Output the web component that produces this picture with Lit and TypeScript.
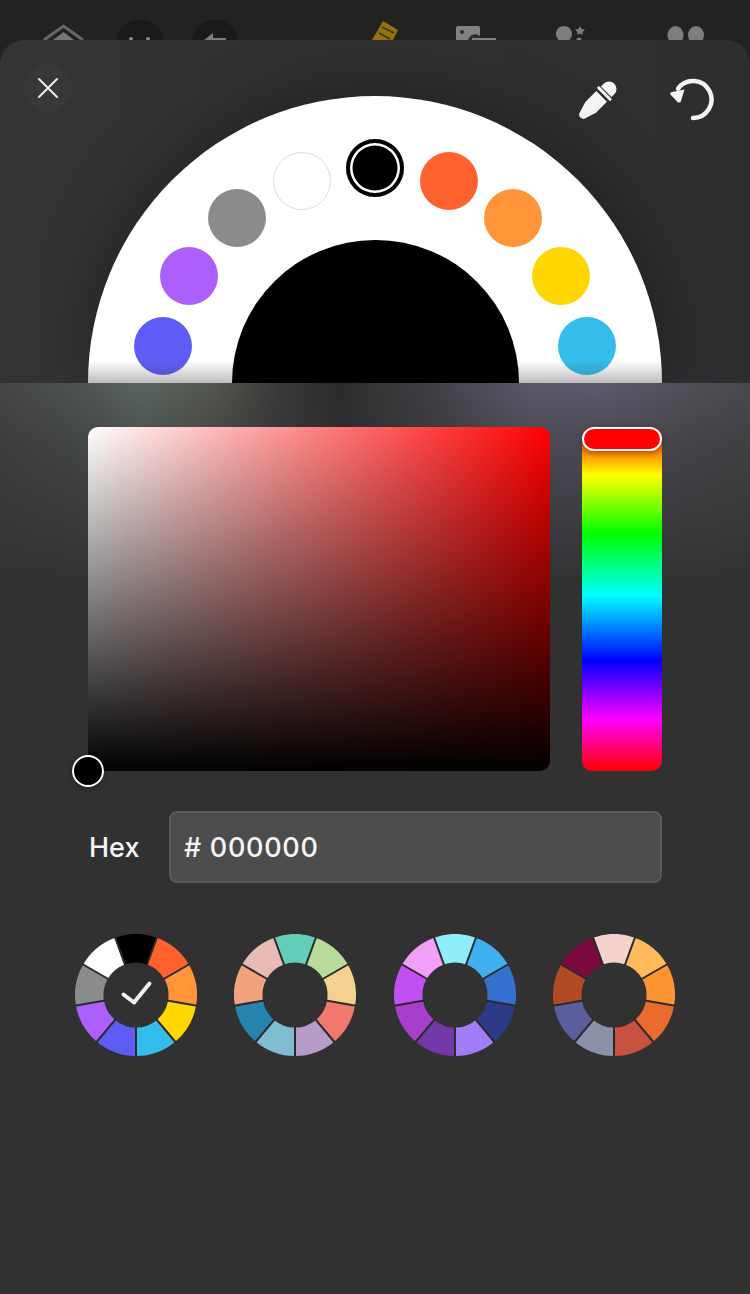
import { LitElement, html, svg, css } from 'lit';
import { customElement, state } from 'lit/decorators.js';

const WHEEL_R = 287;
const SWATCH_ORBIT = 215;
const SWATCH_SIZE = 58;
const PALETTE_R = 61;
const PALETTE_HOLE = 32.5;

// each palette runs clockwise, the first colour sits at twelve o'clock
const PALETTES = [
  ['#000000', '#ff612f', '#ff9438', '#ffd600', '#34bcea', '#5e5cf6', '#ad5ffe', '#8a8b8d', '#ffffff'],
  ['#62cdb8', '#b9dc9c', '#f3d18f', '#f0786e', '#b69bc9', '#7fbccf', '#2683ad', '#f0a37c', '#e8bcb5'],
  ['#90eef8', '#3eb0f0', '#3470d0', '#2c3a88', '#a27df8', '#7238a8', '#a83ecc', '#c050f0', '#f0a0f8'],
  ['#f3d3cb', '#fdb95a', '#fe9332', '#e96b2e', '#c9513f', '#8b91a8', '#5a5f9c', '#b24b24', '#7c0a3e'],
];

function polar(rad: number, a: number) {
  return [PALETTE_R + rad * Math.cos(a), PALETTE_R + rad * Math.sin(a)].map((n) => n.toFixed(2));
}

function segmentStart(i: number, count: number) {
  const step = (Math.PI * 2) / count;
  return -Math.PI / 2 - step / 2 + i * step;
}

function segmentPath(i: number, count: number) {
  const R = PALETTE_R;
  const r = PALETTE_HOLE;
  const a0 = segmentStart(i, count);
  const a1 = segmentStart(i + 1, count);
  return `M${polar(R, a0).join(' ')} A${R} ${R} 0 0 1 ${polar(R, a1).join(' ')} L${polar(r, a1).join(' ')} A${r} ${r} 0 0 0 ${polar(r, a0).join(' ')} Z`;
}

function seamPath(i: number, count: number) {
  const a = segmentStart(i, count);
  return `M${polar(PALETTE_HOLE - 1, a).join(' ')} L${polar(PALETTE_R + 1, a).join(' ')}`;
}

@customElement('app-root')
export class AppRoot extends LitElement {
  static styles = css`
    :host {
      display: block;
      width: 750px;
      height: 1294px;
      overflow: hidden;
      background: #202320;
      font-family: Inter, 'Liberation Sans', sans-serif;
    }
    .backdrop {
      display: block;
      width: 750px;
      height: 40px;
    }
    .head {
      position: relative;
      height: 343px;
      box-sizing: border-box;
      padding-top: 56px;
      border-radius: 24px 24px 0 0;
      overflow: hidden;
      background: linear-gradient(90deg, #323534 0%, #2f3131 40%, #2e2d30 100%);
    }
    .close {
      position: absolute;
      left: 24px;
      top: 24px;
      width: 48px;
      height: 48px;
      border-radius: 50%;
      background: #373939;
      display: flex;
      align-items: center;
      justify-content: center;
    }
    .dropper {
      position: absolute;
      left: 572px;
      top: 36px;
    }
    .undo {
      position: absolute;
      left: 664px;
      top: 34px;
    }
    .ring {
      position: relative;
      width: 574px;
      height: 287px;
      margin-left: 88px;
      border-radius: 287px 287px 0 0;
      background: #fff;
      box-shadow: 0 0 70px rgba(0, 0, 0, 0.35);
    }
    .ring::after {
      content: '';
      position: absolute;
      left: 0;
      right: 0;
      bottom: 0;
      height: 22px;
      background: linear-gradient(rgba(60, 62, 62, 0), rgba(60, 62, 62, 0.34));
    }
    .hole {
      position: absolute;
      left: 144px;
      bottom: 0;
      width: 287px;
      height: 143.5px;
      border-radius: 144px 144px 0 0;
      background: #000;
      z-index: 1;
    }
    .swatch {
      position: absolute;
      width: 58px;
      height: 58px;
      box-sizing: border-box;
      border-radius: 50%;
    }
    .swatch.light {
      border: 1px solid #dcdce4;
    }
    .swatch.selected {
      box-shadow: inset 0 0 0 4px #000, inset 0 0 0 6.5px #fff;
    }
    .panel {
      height: 911px;
      box-sizing: border-box;
      padding: 44px 88px 0;
      background:
        linear-gradient(rgba(50, 49, 50, 0), rgba(50, 49, 50, 0.4) 60px, #323132 200px) no-repeat,
        linear-gradient(90deg, #454545 0%, #4c5150 9%, #5b6560 19%, #54574f 28%, #3a3a3a 37%, #2b2b2b 45%,
          #3e3c40 56%, #5a5868 70%, #5c5a6c 80%, #525058 91%, #4a484c 100%);
    }
    .picker {
      display: flex;
      gap: 32px;
      height: 344px;
    }
    .sv {
      position: relative;
      flex: 1;
      border-radius: 10px;
      background:
        linear-gradient(to top, #000, rgba(0, 0, 0, 0)),
        linear-gradient(to right, #fff, #f00);
    }
    .sv-handle {
      position: absolute;
      left: -16px;
      bottom: -16px;
      width: 32px;
      height: 32px;
      box-sizing: border-box;
      border: 2px solid #fff;
      border-radius: 50%;
      background: #000;
      box-shadow: 0 1px 5px rgba(0, 0, 0, 0.4);
    }
    .hue {
      position: relative;
      width: 80px;
      border-radius: 10px;
      background: linear-gradient(#f00, #ff0 14%, #0f0 31%, #0ff 49%, #00f 68%, #f0f 85%, #f00);
    }
    .hue-handle {
      position: absolute;
      left: 0;
      top: 0;
      width: 80px;
      height: 24px;
      box-sizing: border-box;
      border: 2px solid #fff;
      border-radius: 12px;
      background: #f00;
      box-shadow: 0 2px 6px rgba(0, 0, 0, 0.35);
    }
    .hex-row {
      display: flex;
      align-items: center;
      height: 72px;
      margin-top: 40px;
    }
    .hex-label {
      width: 81px;
      padding-left: 1px;
      box-sizing: border-box;
      color: #f5f5f5;
      font-size: 27px;
      font-weight: 500;
    }
    .hex-input {
      flex: 1;
      height: 72px;
      box-sizing: border-box;
      display: flex;
      align-items: center;
      padding-left: 13px;
      border: 2px solid #5a595a;
      border-radius: 8px;
      background: #4d4c4d;
      color: #f5f5f5;
      font-size: 27px;
      font-weight: 500;
      letter-spacing: 0.7px;
      white-space: pre;
    }
    .palettes {
      display: flex;
      justify-content: space-between;
      margin: 51px -13px 0;
    }
    .palette {
      display: block;
      width: 122px;
      height: 122px;
    }
    .palette .seam {
      fill: none;
      stroke: #2b2a2b;
      stroke-width: 2;
    }
    .palette polyline {
      fill: none;
      stroke: #f4f4f4;
      stroke-width: 4;
      stroke-linecap: round;
      stroke-linejoin: round;
    }
  `;

  @state() private selectedPalette = 0;
  @state() private selectedColor = 0;
  @state() private hex = '000000';

  private renderBackdrop() {
    return html`
      <svg class="backdrop" viewBox="0 0 750 40">
        <path d="M44 40 L63.500 26 L83 40" fill="none" stroke="#666866" stroke-width="3" />
        <path d="M53 40 L63.500 32 L74 40 Z" fill="#757675" />
        <circle cx="140" cy="43" r="23.500" fill="#191b19" />
        <circle cx="131" cy="39" r="2" fill="#8a8a8a" />
        <circle cx="148" cy="39" r="2" fill="#8a8a8a" />
        <circle cx="215" cy="43" r="23.500" fill="#191b19" />
        <path d="M213 33 L204 40 L226 40 L226 38 L213 38 Z" fill="#7c7d7c" />
        <path d="M383 21 L398 30 L393 40 L372 40 Z" fill="#96720c" />
        <path d="M382 27 L394 33 M379 33 L390 39" stroke="#3a3416" stroke-width="1.500" />
        <path d="M456 28 Q456 26 458 26 L478 26 Q480 26 480 28 L480 40 L456 40 Z" fill="#808180" />
        <circle cx="462" cy="32" r="2" fill="#2b2c2b" />
        <path d="M468 40 Q470 34 476 34 L480 36 L480 40 Z" fill="#2b2c2b" />
        <rect x="472" y="38" width="24" height="2" fill="#808180" />
        <circle cx="564" cy="34" r="8" fill="#7d7e7d" />
        <path d="M580 26 L581.500 29 L585 29.500 L582.500 32 L583 35 L580 33.500 L577 35 L577.500 32 L575 29.500 L578.500 29 Z" fill="#7d7e7d" />
        <circle cx="579" cy="40" r="2.500" fill="#7d7e7d" />
        <ellipse cx="675.500" cy="35" rx="8" ry="9" fill="#7d7e7d" />
        <ellipse cx="696" cy="35" rx="8" ry="9" fill="#7d7e7d" />
      </svg>
    `;
  }

  private renderSwatches() {
    const colors = PALETTES[this.selectedPalette];
    const center = WHEEL_R;
    // the wheel shows four colours each side of the current one
    return [-4, -3, -2, -1, 0, 1, 2, 3, 4].map((slot) => {
      const color = colors[(slot + colors.length + this.selectedColor) % colors.length];
      const angle = (slot * 20 * Math.PI) / 180;
      const x = center + SWATCH_ORBIT * Math.sin(angle) - SWATCH_SIZE / 2;
      const y = center - SWATCH_ORBIT * Math.cos(angle) - SWATCH_SIZE / 2;
      const cls = `swatch ${slot === 0 ? 'selected' : ''} ${color === '#ffffff' ? 'light' : ''}`;
      return html`<div
        class=${cls}
        style="left:${x.toFixed(1)}px;top:${y.toFixed(1)}px;background:${color}"
      ></div>`;
    });
  }

  private renderPalette(colors: string[], index: number) {
    return html`
      <svg class="palette" viewBox="0 0 122 122">
        ${colors.map((c, i) => svg`<path d=${segmentPath(i, colors.length)} fill=${c}></path>`)}
        ${colors.map((_, i) => svg`<path class="seam" d=${seamPath(i, colors.length)}></path>`)}
        ${index === this.selectedPalette
          ? svg`<polyline points="48.500,60.500 59,68.500 74.500,49.500"></polyline>`
          : ''}
      </svg>
    `;
  }

  protected render() {
    return html`
      ${this.renderBackdrop()}
      <div class="head">
        <div class="close">
          <svg width="22" height="22" viewBox="0 0 22 22">
            <path d="M2 2 L20 20 M20 2 L2 20" stroke="#f2f2f2" stroke-width="1.800" stroke-linecap="round" />
          </svg>
        </div>
        <svg class="dropper" width="50" height="50" viewBox="0 0 50 50">
          <g transform="rotate(45 25 25)" fill="#f5f5f5">
            <path d="M17.500 12 L17.500 8 A7.500 7.500 0 0 1 32.500 8 L32.500 12 Z" />
            <rect x="15.500" y="13" width="19" height="3" rx="1.500" />
            <path d="M17.500 18.500 L32.500 18.500 L32.500 34 L28.500 47 Q25 50 21.500 47 L17.500 34 Z" />
          </g>
        </svg>
        <svg class="undo" width="54" height="50" viewBox="0 0 54 50">
          <path d="M29 44 A18.500 18.500 0 1 0 14 14.700" fill="none" stroke="#f5f5f5" stroke-width="4.500" stroke-linecap="round" />
          <path d="M6.500 20.500 Q5.500 18.500 8 18 L20.500 15.500 L17 27 Q16 29.500 13.500 28 Z" fill="#f5f5f5" />
        </svg>
        <div class="ring">
          ${this.renderSwatches()}
          <div class="hole"></div>
        </div>
      </div>
      <div class="panel">
        <div class="picker">
          <div class="sv"><div class="sv-handle"></div></div>
          <div class="hue"><div class="hue-handle"></div></div>
        </div>
        <div class="hex-row">
          <div class="hex-label">Hex</div>
          <div class="hex-input"># ${this.hex}</div>
        </div>
        <div class="palettes">
          ${PALETTES.map((colors, i) => this.renderPalette(colors, i))}
        </div>
      </div>
    `;
  }
}
